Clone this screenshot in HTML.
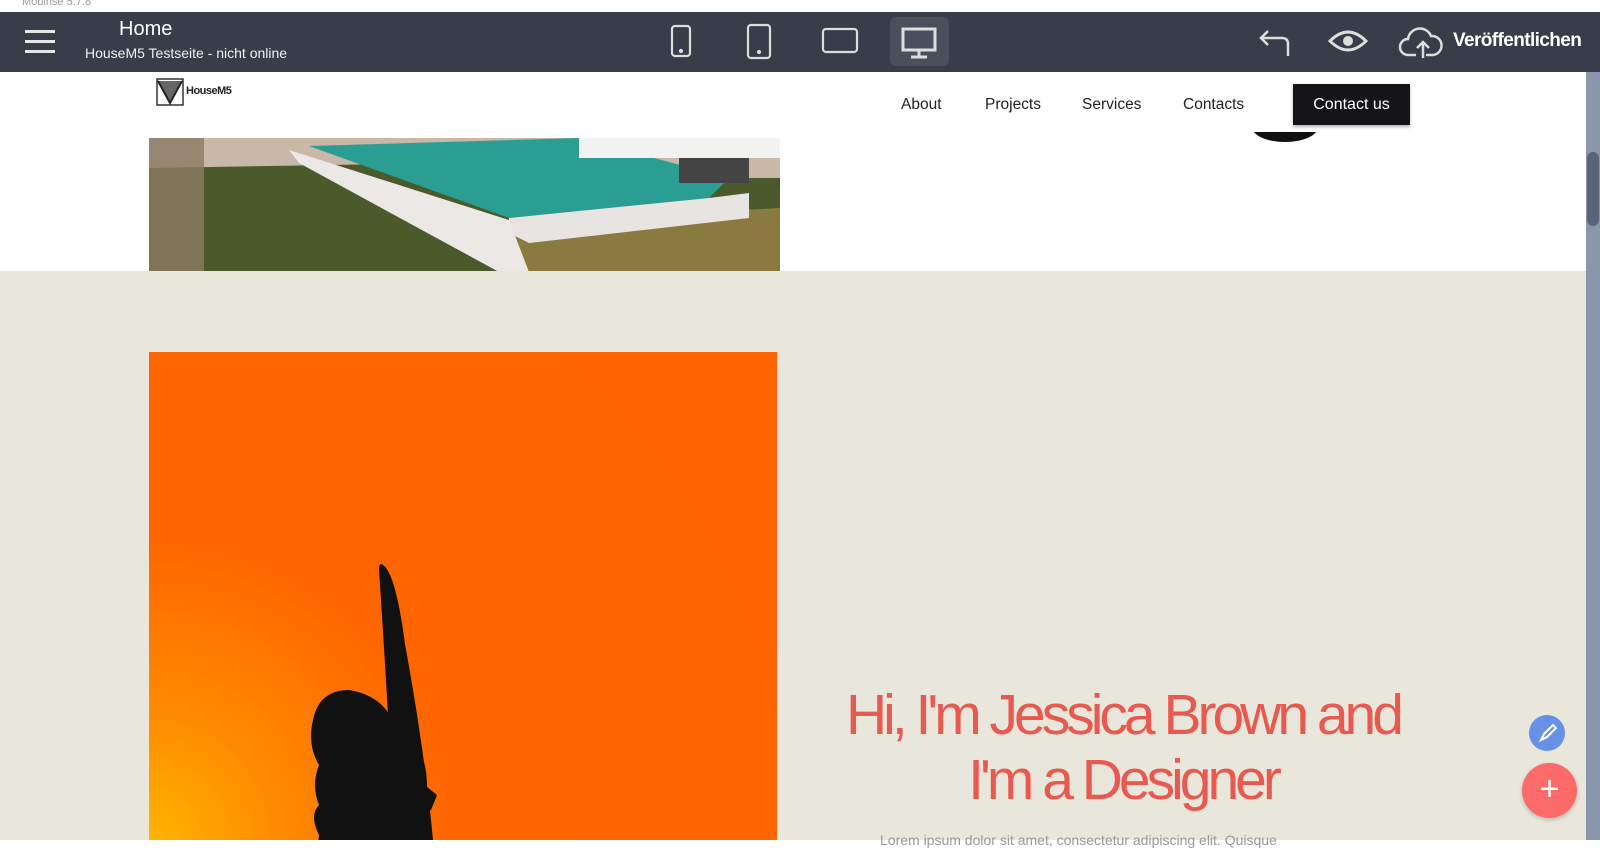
<!DOCTYPE html>
<html><head><meta charset="utf-8"><style>
*{margin:0;padding:0;box-sizing:border-box}
body{width:1600px;height:840px;overflow:hidden;background:#fff;font-family:"Liberation Sans",sans-serif;position:relative}
.abs{position:absolute}
.tb{left:0;top:12px;width:1600px;height:60px;background:#393c49}
.nav a{position:absolute;top:96px;font-size:15.5px;color:#222;text-decoration:none}
</style></head><body>
<div class="abs" style="left:0;top:0;width:1600px;height:12px;background:#fff"></div>
<div class="abs" style="left:22px;top:-4px;font-size:11px;color:#999">Mobirise 5.7.8</div>
<div class="abs tb">
 <div class="abs" style="left:25px;top:18px;width:30px;height:3px;background:#e6e6e6;box-shadow:0 10px 0 #e6e6e6,0 20px 0 #e6e6e6"></div>
 <div class="abs" style="left:119px;top:6px;font-size:20px;color:#fff">Home</div>
 <div class="abs" style="left:85px;top:33px;font-size:14px;color:#f0f0f0">HouseM5 Testseite - nicht online</div>
 <svg class="abs" style="left:0;top:0" width="1600" height="60" fill="none" stroke="#ddd" stroke-width="2.2">
  <rect x="672" y="14" width="18" height="30" rx="3"/><circle cx="681" cy="39" r="1" fill="#ddd"/>
  <rect x="748" y="13" width="22" height="33" rx="3"/><circle cx="759" cy="40" r="1" fill="#ddd"/>
  <rect x="823" y="17" width="34" height="23" rx="3"/>
  <rect x="890" y="5" width="59" height="49" rx="6" fill="#4b4e5b" stroke="none"/>
  <rect x="903" y="17" width="32" height="21" stroke-width="3"/><path d="M919 38v6M911 45h16" stroke-width="3"/>
  <path d="M1288 44v-12q0-6-6-6h-20M1268 19l-7 7 7 7" stroke-width="2.5"/>
  <path d="M1330 29q18-18 36 0q-18 18-36 0z" stroke-width="3"/><circle cx="1348" cy="29" r="5" fill="#ddd" stroke="none"/>
  <path d="M1416 43h-8a8 8 0 0 1 0-16a12 12 0 0 1 23-3a9 9 0 0 1 2 19h-7M1423 46v-15M1417 36l6-6 6 6" stroke-width="2.5"/>
 </svg>
 <div class="abs" style="left:1453px;top:18px;font-size:19px;color:#fff;font-weight:bold;letter-spacing:-0.6px">Veröffentlichen</div>
</div>
<svg class="abs" style="left:156px;top:78px" width="28" height="28"><rect x="1" y="1" width="26" height="26" fill="#fff" stroke="#333" stroke-width="1.5"/><path d="M2 3l24 0-12 20z" fill="#666"/><path d="M2 3l12 22 12-22" fill="none" stroke="#222" stroke-width="2"/></svg>
<div class="abs" style="left:186px;top:85px;font-size:11px;font-weight:bold;color:#222;letter-spacing:-0.5px">HouseM5</div>
<div class="nav">
 <a style="left:901px">About</a><a style="left:985px">Projects</a><a style="left:1082px">Services</a><a style="left:1183px">Contacts</a>
</div>
<div class="abs" style="left:1293px;top:84px;width:117px;height:41px;background:#151518;color:#fff;font-size:16px;text-align:center;line-height:41px;box-shadow:0 2px 3px rgba(0,0,0,.3)">Contact us</div>
<div class="abs" style="left:1252px;top:112px;width:66px;height:30px;border-radius:50%;background:#111;clip-path:inset(20px 0 0 0)"></div>
<svg class="abs" style="left:149px;top:138px" width="631" height="134">
 <rect width="631" height="134" fill="#7e6e4f"/>
 <rect width="631" height="40" fill="#c9b8a8"/>
 <polygon points="0,30 300,25 400,40 631,40 631,134 0,134" fill="#4a5a2a"/>
 <polygon points="350,85 631,70 631,134 380,134" fill="#8a7a40"/>
 <polygon points="160,8 430,0 580,40 560,60 360,80" fill="#2a9e92"/>
 <polygon points="360,80 560,60 600,55 600,80 380,105 360,95" fill="#e8e4e2"/>
 <polygon points="140,12 360,82 380,134 350,134 150,25" fill="#ece8e6"/>
 <rect x="430" y="0" width="201" height="20" fill="#f2f2f0"/>
 <rect x="530" y="20" width="70" height="25" fill="#444"/>
 <rect x="0" y="0" width="55" height="134" fill="#8b7a62" opacity=".8"/>
</svg>
<div class="abs" style="left:0;top:271px;width:1586px;height:569px;background:#e9e6dc"></div>
<div class="abs" style="left:149px;top:352px;width:628px;height:488px;background:radial-gradient(circle at 0% 100%,#ffb400 0,#ff8a00 130px,#ff6600 300px,#ff6400 100%)"></div>
<svg class="abs" style="left:149px;top:352px" width="628" height="488">
 <path d="M232 212q14 4 24 80q20 110 28 196h-38q-8-150 -16-270q0-6 2-6z" fill="#111"/>
 <path d="M200 338q-30 0-36 30q-6 25 6 45q-8 20 0 40q-10 10 0 30l-4 35h105l-3-60q8 4 14 0l6-15-10-8q0-30-12-40q-10-10-18-10q-6-40-48-47z" fill="#111"/>
</svg>
<div class="abs" style="left:780px;top:683px;width:686px;text-align:center;color:#e85a4f;font-size:57px;line-height:65px;letter-spacing:-4px;font-family:'Liberation Sans',sans-serif;white-space:nowrap">Hi, I'm Jessica Brown and<br>I'm a Designer</div>
<div class="abs" style="left:880px;top:832px;font-size:14px;color:#999">Lorem ipsum dolor sit amet, consectetur adipiscing elit. Quisque</div>
<div class="abs" style="left:1586px;top:72px;width:14px;height:768px;background:#8a97ab"></div>
<div class="abs" style="left:1587px;top:152px;width:12px;height:74px;border-radius:6px;background:#5a6478"></div>
<div class="abs" style="left:1529px;top:715px;width:36px;height:36px;border-radius:50%;background:#6592e6"></div>
<svg class="abs" style="left:1529px;top:715px" width="36" height="36"><path d="M12 25l3-6 9-9 3 3-9 9z" fill="none" stroke="#fff" stroke-width="2"/></svg>
<div class="abs" style="left:1522px;top:763px;width:55px;height:55px;border-radius:50%;background:#fd6a6a;color:#fff;font-size:34px;text-align:center;line-height:53px;box-shadow:0 2px 4px rgba(0,0,0,.2)">+</div>
</body></html>
